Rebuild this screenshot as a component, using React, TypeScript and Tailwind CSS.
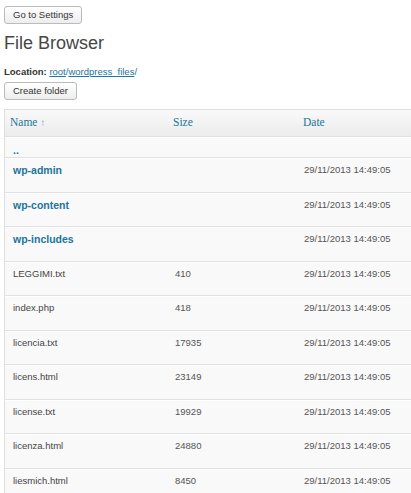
import React from 'react';

type Entry = { name: string; dir?: boolean; size?: string; date?: string };

const DATE = '29/11/2013 14:49:05';

const entries: Entry[] = [
  { name: 'wp-admin', dir: true, date: DATE },
  { name: 'wp-content', dir: true, date: DATE },
  { name: 'wp-includes', dir: true, date: DATE },
  { name: 'LEGGIMI.txt', size: '410', date: DATE },
  { name: 'index.php', size: '418', date: DATE },
  { name: 'licencia.txt', size: '17935', date: DATE },
  { name: 'licens.html', size: '23149', date: DATE },
  { name: 'license.txt', size: '19929', date: DATE },
  { name: 'licenza.html', size: '24880', date: DATE },
  { name: 'liesmich.html', size: '8450', date: DATE },
];

const Button: React.FC<{ children: React.ReactNode; className?: string }> = ({ children, className = '' }) => (
  <button
    className={`block h-[18px] px-2 border border-[#bbb] rounded-[3px] bg-linear-to-b from-white to-[#ededed] text-[9.5px] leading-none text-[#333] ${className}`}
  >
    {children}
  </button>
);

const App: React.FC = () => {
  return (
    <div className="h-[493px] w-[411px] overflow-hidden bg-white font-['Liberation_Sans',Arial,sans-serif] text-[#333]">
      <div className="pl-1 pt-1.5">
        <Button>Go to Settings</Button>

        <h2 className="mt-[8px] text-[18px] leading-[22px] text-[#464646]">File Browser</h2>

        <p className="mt-[12px] text-[9.5px] leading-[12px]">
          <b className="text-[#333]">Location:</b>{' '}
          <a className="text-[#21759b] underline">root</a>
          <span className="text-[#21759b]">/</span>
          <a className="text-[#21759b] underline">wordpress_files</a>
          <span className="text-[#21759b]">/</span>
        </p>

        <Button className="mt-[4px]">Create folder</Button>

        {/* File table */}
        <div className="mt-[9px] w-[470px] border border-[#dfdfdf] bg-[#f9f9f9]">
          <div className="flex h-[27px] items-center border-b border-[#dfdfdf] bg-linear-to-b from-[#f9f9f9] to-[#ececec] font-['Liberation_Serif',Georgia,serif] text-[11.5px] text-[#21759b]">
            <div className="w-[163px] pl-[5px]">
              Name <span className="font-['Liberation_Sans',sans-serif] text-[10px] text-[#6e9bb4]">↑</span>
            </div>
            <div className="w-[130px] pl-[5px]">Size</div>
            <div className="flex-1 pl-[5px]">Date</div>
          </div>

          <div className="h-[21px] border-t border-white border-b border-b-[#e1e1e1] pl-[8px] pt-[6px] text-[10.5px] font-bold leading-[12px] text-[#21759b]">
            ..
          </div>

          {entries.map((e) => (
            <div
              key={e.name}
              className="flex h-[34.5px] border-t border-white border-b border-b-[#e1e1e1] pt-[5px] text-[9.5px] leading-[12px] text-[#555]"
            >
              <div className="w-[163px] pl-[8px]">
                {e.dir ? (
                  <span className="text-[10.5px] font-bold text-[#21759b]">{e.name}</span>
                ) : (
                  <span className="text-[#444]">{e.name}</span>
                )}
              </div>
              <div className="w-[130px] pl-[7px]">{e.size}</div>
              <div className="flex-1 pl-[6px]">{e.date}</div>
            </div>
          ))}
        </div>
      </div>
    </div>
  );
};

export default App;
